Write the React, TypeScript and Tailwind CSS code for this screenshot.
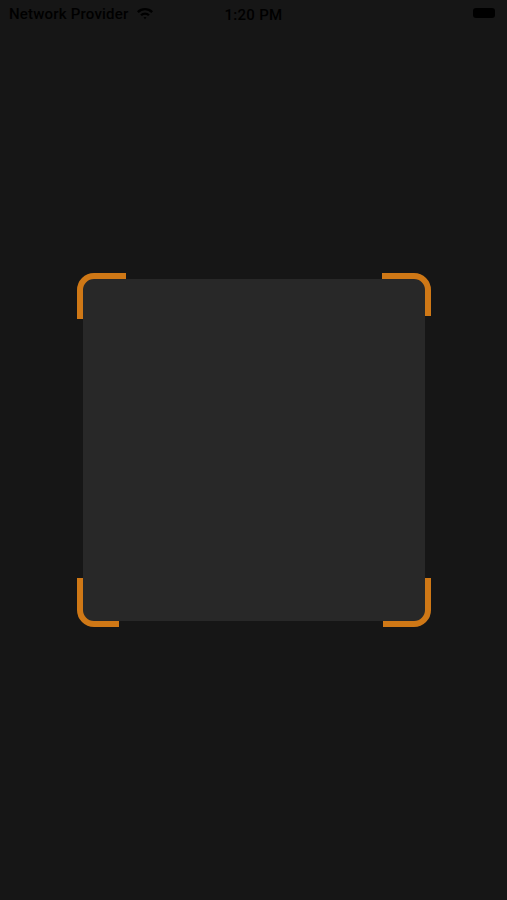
import React from "react";

function StatusBar() {
  return (
    <div className="relative h-7 flex items-center pl-[9px] text-black text-[15px] font-medium font-['Roboto',sans-serif]">
      <span className="tracking-[0.2px]">Network Provider</span>
      <svg width="18" height="14" viewBox="0 0 18 14" className="ml-[7px] mb-[2px]">
        <path d="M1 5.2 A11.5 11.5 0 0 1 17 5.2 L15.3 6.9 A9 9 0 0 0 2.7 6.9 Z" fill="#000" />
        <path d="M4.2 8.4 A7 7 0 0 1 13.8 8.4 L12.1 10.1 A4.6 4.6 0 0 0 5.9 10.1 Z" fill="#000" />
        <path d="M7.5 11.6 A2.2 2.2 0 0 1 10.5 11.6 L9 13.2 Z" fill="#000" />
      </svg>
      <span className="absolute left-1/2 -translate-x-1/2 top-[4px] tracking-[0.3px]">1:20 PM</span>
      <div className="ml-auto mr-[12px] w-[22px] h-[10px] rounded-[3px] bg-black mb-[2px]" />
    </div>
  );
}

function Corners() {
  const c = "#cf7816";
  return (
    <svg width="354" height="354" viewBox="0 0 354 354" className="absolute inset-0">
      <g fill="none" stroke={c} strokeWidth="6">
        <path d="M3 46 L3 17 A14 14 0 0 1 17 3 L49 3" />
        <path d="M305 3 L337 3 A14 14 0 0 1 351 17 L351 43" />
        <path d="M3 305 L3 337 A14 14 0 0 0 17 351 L42 351" />
        <path d="M306 351 L337 351 A14 14 0 0 0 351 337 L351 305" />
      </g>
    </svg>
  );
}

export default function App() {
  return (
    <div className="h-[900px] w-full bg-[#161616] flex flex-col overflow-hidden">
      <StatusBar />
      <div className="mt-[245px] mx-auto w-[354px] h-[354px] relative p-[6px]">
        <div className="w-full h-full bg-[#282828]" />
        <Corners />
      </div>
    </div>
  );
}
